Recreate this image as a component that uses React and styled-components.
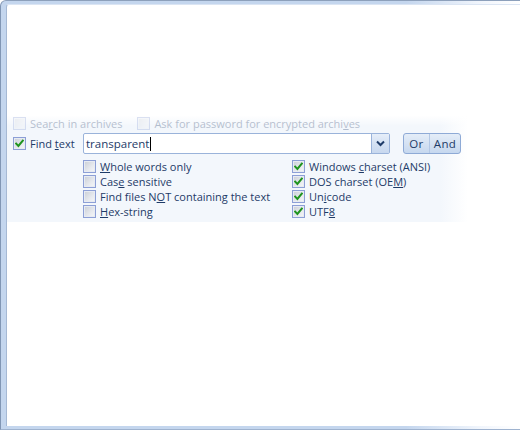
import React from "react";
import styled, { createGlobalStyle } from "styled-components";

const GlobalStyle = createGlobalStyle`
  html, body {
    margin: 0;
    padding: 0;
    background: #ffffff;
  }
  body {
    font-family: "Open Sans", "Noto Sans", sans-serif;
    font-size: 11px;
    color: #1e3b68;
  }
`;

const leftOptions = [
  { pre: "", key: "W", post: "hole words only", checked: false },
  { pre: "Cas", key: "e", post: " sensitive", checked: false },
  { pre: "Find files N", key: "O", post: "T containing the text", checked: false },
  { pre: "", key: "H", post: "ex-string", checked: false },
];

const rightOptions = [
  { pre: "Windows ", key: "c", post: "harset (ANSI)", checked: true },
  { pre: "DOS charset (OE", key: "M", post: ")", checked: true },
  { pre: "Un", key: "i", post: "code", checked: true },
  { pre: "UTF", key: "8", post: "", checked: true },
];

const Check = ({ checked }) => (
  <Box>
    {checked && (
      <svg width="9" height="9" viewBox="0 0 9 9">
        <path
          d="M1.2 4.6 L3.4 7 L7.8 1.6"
          fill="none"
          stroke="#1f941f"
          strokeWidth="2"
          strokeLinecap="square"
        />
      </svg>
    )}
  </Box>
);

const Option = ({ item }) => (
  <OptionRow>
    <Check checked={item.checked} />
    <Label>
      {item.pre}
      <u>{item.key}</u>
      {item.post}
    </Label>
  </OptionRow>
);

const App = () => {
  return (
    <>
      <GlobalStyle />
      <Window>
        <Client>
          <TopSpace />
          <Panel>
            <ArchiveRow>
              <Check checked={false} />
              <Label>
                Sea<u>r</u>ch in archives
              </Label>
              <Spacer />
              <Check checked={false} />
              <Label>
                Ask for password for encrypted archi<u>v</u>es
              </Label>
            </ArchiveRow>

            <FindRow>
              <FindLabel>
                <Check checked />
                <Label>
                  Find <u>t</u>ext
                </Label>
              </FindLabel>
              <Combo>
                <ComboText>
                  transparent<Caret />
                </ComboText>
                <ComboButton>
                  <svg width="9" height="7" viewBox="0 0 9 7">
                    <path
                      d="M1 1.5 L4.5 5 L8 1.5"
                      fill="none"
                      stroke="#1e3b68"
                      strokeWidth="2"
                    />
                  </svg>
                </ComboButton>
              </Combo>
              <Segmented>
                <SegButton>Or</SegButton>
                <SegButton $last>And</SegButton>
              </Segmented>
            </FindRow>

            <OptionsGrid>
              <Column>
                {leftOptions.map((o) => (
                  <Option key={o.pre + o.key} item={o} />
                ))}
              </Column>
              <Column>
                {rightOptions.map((o) => (
                  <Option key={o.pre + o.key} item={o} />
                ))}
              </Column>
            </OptionsGrid>
          </Panel>
        </Client>
      </Window>
    </>
  );
};

// Window chrome
const Window = styled.div`
  width: 520px;
  height: 430px;
  box-sizing: border-box;
  padding: 3px 0 4px 5px;
  border-top-left-radius: 6px;
  border-left: 1px solid #8196b4;
  border-top: 1px solid #8da0bb;
  border-bottom: 1px solid #9fb3cf;
  background: linear-gradient(
    to right,
    #c4d6ee 0%,
    #c4d6ee 78%,
    rgba(230, 238, 250, 0.6) 92%,
    #ffffff 100%
  );
  overflow: hidden;
`;

const Client = styled.div`
  height: 100%;
  background: #ffffff;
  border-left: 1px solid #a6b9d4;
  border-top: 1px solid #dbe5f3;
  border-top-left-radius: 3px;
  display: flex;
  flex-direction: column;
`;

const TopSpace = styled.div`
  height: 111px;
  flex-shrink: 0;
`;

const Panel = styled.div`
  width: 461px;
  height: 106px;
  box-sizing: border-box;
  padding: 0 0 0 6px;
  position: relative;
  background: linear-gradient(
    to right,
    #f3f7fc 0%,
    #f3f7fc 94%,
    #ffffff 100%
  );

  &::before {
    content: "";
    position: absolute;
    left: 0;
    right: 0;
    top: 0;
    height: 10px;
    background: linear-gradient(
      to bottom,
      rgba(255, 255, 255, 0.95),
      rgba(255, 255, 255, 0)
    );
    pointer-events: none;
  }
`;

const ArchiveRow = styled.div`
  display: flex;
  align-items: center;
  height: 18px;
  margin-top: -2px;
  opacity: 0.3;
`;

const Spacer = styled.div`
  width: 15px;
`;

const FindRow = styled.div`
  display: flex;
  align-items: center;
  height: 21px;
  margin-top: 1px;
`;

const FindLabel = styled.div`
  display: flex;
  align-items: center;
  width: 70px;
`;

const Box = styled.span`
  width: 13px;
  height: 13px;
  box-sizing: border-box;
  border: 1px solid #8c9fd6;
  background: linear-gradient(135deg, #c9ced6 0%, #e6e9ee 60%, #f6f7f9 100%);
  box-shadow: inset 0 0 0 1px #e7ebf2;
  display: inline-flex;
  align-items: center;
  justify-content: center;
  flex-shrink: 0;
  margin-right: 4px;
`;

const Label = styled.span`
  white-space: nowrap;
  line-height: 15px;
`;

const Combo = styled.div`
  width: 307px;
  height: 21px;
  box-sizing: border-box;
  border: 1px solid #9ab3da;
  border-radius: 2px;
  background: #ffffff;
  display: flex;
  align-items: stretch;
`;

const ComboText = styled.div`
  flex: 1;
  display: flex;
  align-items: center;
  padding-left: 2px;
  color: #1e3b68;
  font-size: 11.5px;
`;

const Caret = styled.span`
  width: 1px;
  height: 14px;
  background: #000000;
  margin-left: 1px;
`;

const ComboButton = styled.div`
  width: 17px;
  border-left: 1px solid #9ab3da;
  background: linear-gradient(to bottom, #e6eef9 0%, #d4e1f3 50%, #c8d8ef 100%);
  display: flex;
  align-items: center;
  justify-content: center;
`;

const Segmented = styled.div`
  display: flex;
  height: 21px;
  margin-left: 13px;
  box-sizing: border-box;
  border: 1px solid #8eaad6;
  border-radius: 3px;
  overflow: hidden;
  background: linear-gradient(to bottom, #e4edf8 0%, #d5e2f3 50%, #c6d8ef 100%);
`;

const SegButton = styled.div`
  display: flex;
  align-items: center;
  justify-content: center;
  width: ${(p) => (p.$last ? "31px" : "25px")};
  box-sizing: border-box;
  border-left: ${(p) => (p.$last ? "1px solid #b3c8e6" : "none")};
  color: #1e3b68;
  font-size: 11.5px;
  letter-spacing: 0.4px;
`;

const OptionsGrid = styled.div`
  display: grid;
  grid-template-columns: 209px 1fr;
  margin-left: 70px;
  margin-top: 5px;
`;

const Column = styled.div`
  display: flex;
  flex-direction: column;
`;

const OptionRow = styled.div`
  display: flex;
  align-items: center;
  height: 15px;
`;

export default App;
